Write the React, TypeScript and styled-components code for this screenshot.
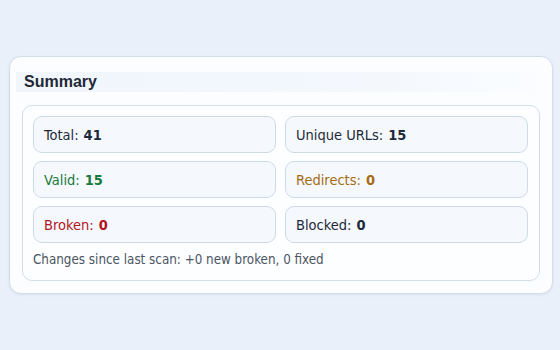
import styled, { createGlobalStyle } from 'styled-components';

const GlobalStyle = createGlobalStyle`
  html, body {
    margin: 0;
    padding: 0;
    background: #e9f0fa;
  }
  body {
    font-family: "DejaVu Sans Condensed", "DejaVu Sans", Tahoma, sans-serif;
  }
`;

type Tone = 'default' | 'good' | 'warn' | 'bad';

const toneColor: Record<Tone, string> = {
  default: '#1f2937',
  good: '#1a7a3c',
  warn: '#a66a12',
  bad: '#b3151b',
};

const Page = styled.div`
  height: 350px;
  box-sizing: border-box;
  padding: 56px 7px 0 9px;
`;

const Card = styled.section`
  box-sizing: border-box;
  height: 238px;
  padding: 15px 6px 12px;
  background: #fcfdff;
  border: 1px solid #d3ddea;
  border-radius: 12px;
  box-shadow: 0 1px 3px rgba(40, 70, 120, 0.08);
  display: flex;
  flex-direction: column;
  gap: 13px;
`;

const Header = styled.h2`
  margin: 0;
  height: 20px;
  padding: 0 8px;
  display: flex;
  align-items: center;
  background: linear-gradient(90deg, #f1f6fc 0%, #f4f8fd 70%, #fbfdff 100%);
  font-family: "Liberation Sans", Arial, sans-serif;
  font-size: 16px;
  font-weight: 700;
  color: #1f2937;
`;

const Body = styled.div`
  flex: 1;
  margin: 0 6px;
  padding: 10px 11px 0 10px;
  border: 1px solid #d3ddea;
  border-radius: 10px;
  background: #fdfeff;
`;

const Grid = styled.div`
  display: grid;
  grid-template-columns: 1fr 1fr;
  column-gap: 9px;
  row-gap: 8px;
`;

const Stat = styled.div<{ $tone: Tone }>`
  height: 37px;
  box-sizing: border-box;
  padding: 0 10px;
  display: flex;
  align-items: center;
  border: 1px solid #cfdae8;
  border-radius: 9px;
  background: #f5f9fd;
  font-size: 14.5px;
  color: ${(p) => toneColor[p.$tone]};

  b {
    margin-left: 5px;
    font-weight: 700;
    color: ${(p) => (p.$tone === 'default' ? '#1e293b' : toneColor[p.$tone])};
  }
`;

const Note = styled.p`
  margin: 9px 0 0;
  font-size: 13.3px;
  color: #4b5563;
`;

const stats: { label: string; value: number; tone: Tone }[] = [
  { label: 'Total:', value: 41, tone: 'default' },
  { label: 'Unique URLs:', value: 15, tone: 'default' },
  { label: 'Valid:', value: 15, tone: 'good' },
  { label: 'Redirects:', value: 0, tone: 'warn' },
  { label: 'Broken:', value: 0, tone: 'bad' },
  { label: 'Blocked:', value: 0, tone: 'default' },
];

const App = () => {
  return (
    <>
      <GlobalStyle />
      <Page>
        <Card>
          <Header>Summary</Header>
          <Body>
            <Grid>
              {stats.map((s) => (
                <Stat key={s.label} $tone={s.tone}>
                  {s.label}
                  <b>{s.value}</b>
                </Stat>
              ))}
            </Grid>
            <Note>Changes since last scan: +0 new broken, 0 fixed</Note>
          </Body>
        </Card>
      </Page>
    </>
  );
};

export default App;
